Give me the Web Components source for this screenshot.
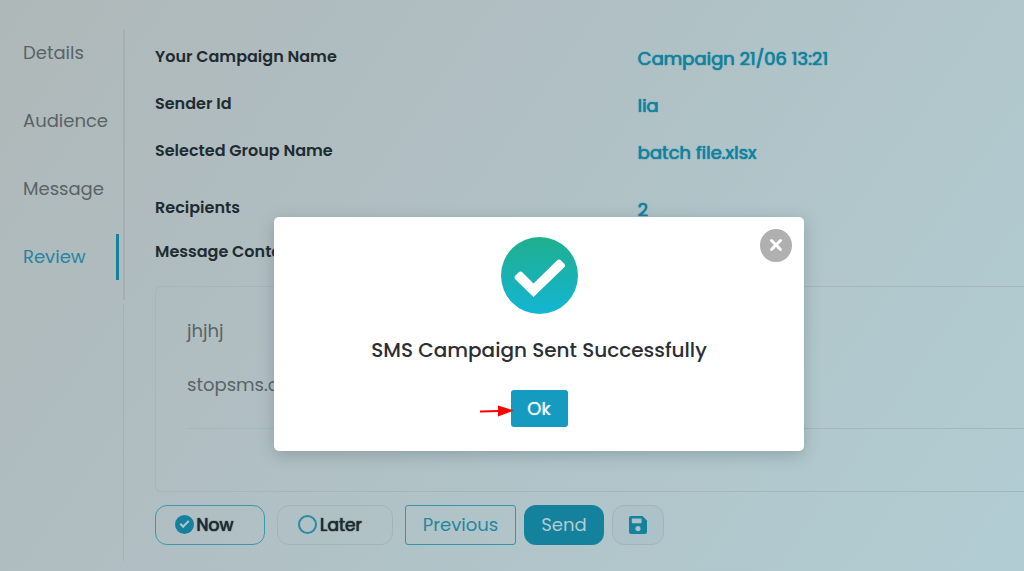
<!DOCTYPE html>
<html lang="en">
<head>
<meta charset="utf-8">
<title>Campaign review</title>
<style>
html,body{margin:0;min-height:100%}
html{height:100%}
body{height:100%;overflow:hidden;font-family:Poppins,Inter,"Open Sans",sans-serif;color:#202b31;
--brand:#14829d;--line:#a5b6bc;--muted:#596366;--embolden:0 0 1px currentColor,0 0 1px currentColor;
background:linear-gradient(125deg,#afb8b9 0%,#b0bfc3 40%,#b1cdd3 100%)}
</style>
</head>
<body>
<campaign-page></campaign-page>
<script>
function define(name, html){
  const t=document.createElement('template');
  t.innerHTML=html;
  customElements.define(name,class extends HTMLElement{
    connectedCallback(){
      if(this.shadowRoot)return;
      this.attachShadow({mode:'open'}).append(t.content.cloneNode(true));
    }
  });
}

define('step-link',`
<style>
:host{display:block;height:46px}
a{display:flex;align-items:center;height:100%;box-sizing:border-box;padding-bottom:2px;font-size:18px;color:var(--muted);text-decoration:none}
:host([active]) a{color:#24869f;border-right:3px solid var(--brand);margin-right:4px}
</style>
<a href="#"><slot></slot></a>`);

define('step-nav',`
<style>
:host{display:flex;flex-direction:column}
nav{display:flex;flex-direction:column;gap:22px;padding:0 0 20px 23px;border-right:2px solid #a3afb2}
.rest{flex:1;margin:4px 1px 10px 0;border-right:1px solid #a4b2b6}
</style>
<nav aria-label="Steps">
<step-link>Details</step-link><step-link>Audience</step-link><step-link>Message</step-link><step-link active>Review</step-link>
</nav><div class="rest"></div>`);

define('summary-row',`
<style>
:host{display:grid;grid-template-columns:5fr 4fr;align-items:start}
.k{font-size:16px;line-height:24px;font-weight:600}
.v{font-size:18px;line-height:28px;color:var(--brand);text-shadow:var(--embolden)}
</style>
<span class="k"><slot></slot></span><span class="v"><slot name="value"></slot></span>`);

define('campaign-summary',`
<style>
:host{display:flex;flex-direction:column;gap:19px}
.apart{margin-top:10px}
</style>
<summary-row>Your Campaign Name<span slot="value">Campaign 21/06 13:21</span></summary-row>
<summary-row>Sender Id<span slot="value">lia</span></summary-row>
<summary-row>Selected Group Name<span slot="value">batch file.xlsx</span></summary-row>
<summary-row class="apart">Recipients<span slot="value">2</span></summary-row>`);

define('message-preview',`
<style>
:host{display:block}
h2{margin:16px 0 22px;font-size:16px;line-height:24px;font-weight:600}
.box{border:1px solid var(--line);border-right:0;border-radius:6px 0 0 6px;padding:30px 0 62px 31px}
.text{border-bottom:1px solid var(--line);padding-bottom:29px;font-size:18px;line-height:28px;color:var(--muted)}
p{margin:0 0 26px}p:last-child{margin:0}
</style>
<h2>Message Content</h2>
<div class="box"><div class="text"><p>jhjhj</p><p>stopsms.co</p></div></div>`);

define('send-actions',`
<style>
:host{display:flex;gap:12px}
label,button{box-sizing:border-box;height:40px;font:inherit;display:flex;align-items:center;justify-content:center;padding:0 0 1px}
label{border:1px solid #a2b4ba;border-radius:12px;gap:3px;font-size:17px;text-shadow:var(--embolden);cursor:pointer}
label:has(:checked){border-color:#3c98ae}
.now{width:110px;padding-right:12px}.later{width:116px;padding-right:10px}
input{appearance:none;box-sizing:border-box;width:19px;height:19px;margin:0;border:2px solid #2a8ca4;border-radius:50%;display:grid;place-items:center}
input:checked{background:var(--brand);border-color:var(--brand)}
input:checked::after{content:"";width:7px;height:3px;border:solid #b0c4ca;border-width:0 0 2px 2px;transform:rotate(-45deg) translate(1px,-1px)}
.buttons{display:flex;gap:8px}
button{font-size:18px;cursor:pointer}
.prev{width:111px;background:none;border:1px solid #3495ac;border-radius:3px;color:#24869f}
.send{width:80px;background:var(--brand);border:0;border-radius:12px;color:#b5cbd1}
.save{width:52px;background:#adc1c8;border:1px solid #a2b4ba;border-radius:12px;color:var(--brand)}
</style>
<label class="now"><input type="radio" name="when" checked>Now</label>
<label class="later"><input type="radio" name="when">Later</label>
<div class="buttons">
<button class="prev" type="button">Previous</button>
<button class="send" type="button">Send</button>
<button class="save" type="button" aria-label="Save"><svg width="18" height="18" viewBox="0 0 18 18"><path fill="currentColor" fill-rule="evenodd" d="M2 0h11.500L18 4.500V16a2 2 0 0 1-2 2H2a2 2 0 0 1-2-2V2a2 2 0 0 1 2-2zM3.500 2.500a.7.7 0 0 0-.7.700v3.300a.7.7 0 0 0 .7.700h8.400a.7.7 0 0 0 .7-.7V3.200a.7.7 0 0 0-.7-.7zM9 10a2.600 2.600 0 1 0 0 5.200A2.600 2.600 0 0 0 9 10z"/></svg></button>
</div>`);

define('success-dialog',`
<style>
:host{position:absolute;inset:0;display:flex;align-items:center;justify-content:center;padding:97px 0 0 54px;box-sizing:border-box}
section{position:relative;box-sizing:border-box;width:530px;max-width:100%;background:#fff;border-radius:5px;padding:20px 20px 24px;box-shadow:0 4px 16px rgba(40,65,70,.25);display:flex;flex-direction:column;align-items:center}
.close{position:absolute;top:12px;right:12px;width:32px;height:33px;border:0;padding:0 0 2px;border-radius:50%;background:#b0b0b0;display:grid;place-items:center}
svg{display:block}
h1{margin:20px 0 24px;font-size:20px;line-height:32px;font-weight:500;color:#2b2e33}
.ok{position:relative}
.ok button{display:block;width:57px;height:37px;padding:0;border:0;border-radius:3px;background:#159bbf;color:#eef9fc;font:400 18px/28px Poppins,Inter,sans-serif;text-shadow:0 0 1px currentColor}
.arrow{position:absolute;right:54px;top:15px}
</style>
<section role="dialog" aria-labelledby="t">
<button class="close" type="button" aria-label="Close"><svg width="14" height="14" viewBox="0 0 14 14"><path d="M2.500 2.500l9 9m0-9l-9 9" stroke="#fff" stroke-width="3" stroke-linecap="round"/></svg></button>
<svg width="77" height="77" viewBox="0 0 77 77"><defs><linearGradient id="g" x2="0" y2="1"><stop stop-color="#20af8d"/><stop offset="1" stop-color="#13b5d4"/></linearGradient></defs><circle cx="38.500" cy="38.500" r="38.500" fill="url(#g)"/><path d="M14.500 42.500q-2-2 0-4l3-3q2-2 4 0L32.500 46.500 56 23.500q2-2 4 0l3 3q2 2 0 4L32.500 60z" fill="#fff"/></svg>
<h1 id="t">SMS Campaign Sent Successfully</h1>
<div class="ok"><button type="button">Ok</button>
<svg class="arrow" width="34" height="12" viewBox="0 0 34 12" aria-hidden="true"><path d="M0 6.600L20 6" stroke="#f00" stroke-width="2"/><path d="M18 .5L34 5.500 18 11.500z" fill="#f00"/></svg></div>
</section>`);

define('campaign-page',`
<style>
:host{display:block;position:relative;min-height:100%;overflow:hidden}
.layout{display:grid;grid-template-columns:125px 1fr;min-height:100vh;box-sizing:border-box;padding-top:30px}
main{padding:15px 0 26px 30px;min-width:0}
send-actions{margin-top:13px}
</style>
<div class="layout"><step-nav></step-nav>
<main><campaign-summary></campaign-summary><message-preview></message-preview><send-actions></send-actions></main></div>
<success-dialog></success-dialog>`);
</script>
</body>
</html>
